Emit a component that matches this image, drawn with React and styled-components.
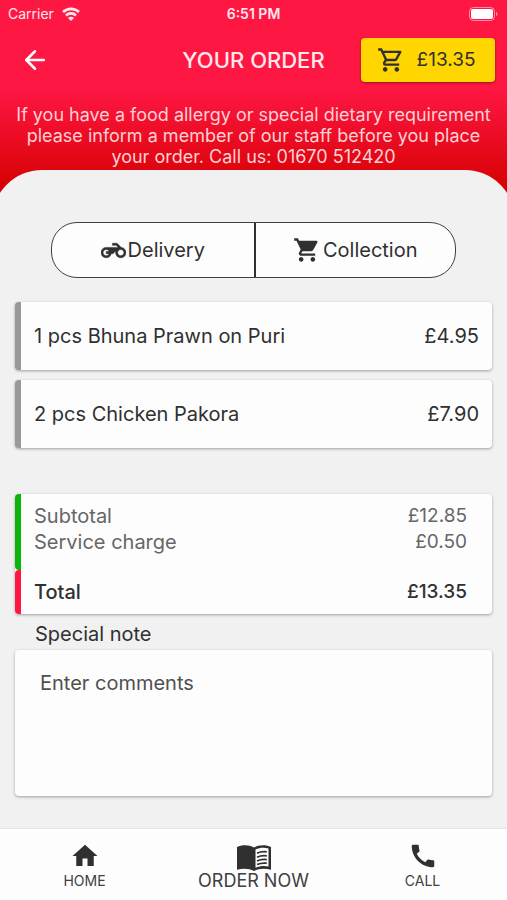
import { createGlobalStyle, styled } from "styled-components";

import { FiArrowLeft } from 'react-icons/fi';
import { MdOutlineShoppingCart, MdShoppingCart, MdHome, MdCall } from 'react-icons/md';

const items = [
  { qty: 1, name: 'Bhuna Prawn on Puri', price: '£4.95' },
  { qty: 2, name: 'Chicken Pakora', price: '£7.90' },
];

const MotorcycleIcon = () => (
  <Motorcycle viewBox="0 0 24 24" aria-hidden="true">
    <path d="M19.44 9.03L15.41 5H11v2h3.59l2 2H5c-2.8 0-5 2.2-5 5s2.2 5 5 5c2.46 0 4.45-1.69 4.9-4h1.65l2.77-2.77c-.21.54-.32 1.14-.32 1.77 0 2.8 2.2 5 5 5s5-2.2 5-5c0-2.65-1.97-4.77-4.56-4.97zM7.82 15C7.4 16.15 6.28 17 5 17c-1.63 0-3-1.37-3-3s1.37-3 3-3c1.28 0 2.4.85 2.82 2H5v2h2.82zM19 17c-1.66 0-3-1.34-3-3s1.34-3 3-3 3 1.34 3 3-1.34 3-3 3z" />
  </Motorcycle>
);

const WifiIcon = () => (
  <svg width="18" height="14" viewBox="0 0 18 14" fill="none" stroke="currentColor" strokeWidth="2.7" aria-hidden="true">
    <path d="M1 5C5.5.7 12.5.7 17 5" />
    <path d="M4 8.4C6.8 5.8 11.2 5.8 14 8.4" />
    <path d="M9 14L6 10.9C7.6 9.5 10.4 9.5 12 10.9Z" fill="currentColor" stroke="none" />
  </svg>
);

const BatteryIcon = () => (
  <svg width="30" height="14" viewBox="0 0 30 14" aria-hidden="true">
    <rect x=".5" y=".5" width="25" height="13" rx="4" fill="none" stroke="#fff" strokeOpacity=".5" />
    <rect x="2" y="2" width="22" height="10" rx="2" fill="#fff" />
    <path d="M27 5c2 .6 2 3.4 0 4z" fill="#fff" fillOpacity=".5" />
  </svg>
);

const MenuBookIcon = () => (
  <MenuBook viewBox="0 0 34 26" aria-hidden="true">
    <path d="M0 2C5-.3 12-.3 17 2.400C22-.3 29-.3 34 2V24.800C28 23 22 23.200 17 26C12 23.200 6 23 0 24.800Z" fill="currentColor" />
    <path d="M18.500 4.500C22.500 2.600 27.500 2.300 31.500 3.500V21.500C27 20.500 22.500 21 18.500 22.800Z" fill="#fdfdfd" />
    <path d="M20 8.200C23 6.800 26.500 6.400 29.800 6.800M20 12.200C23 10.800 26.500 10.400 29.800 10.800M20 16C23 14.600 26.500 14.200 29.800 14.600M20 19.600C23 18.200 26.500 17.800 29.800 18.200" fill="none" stroke="currentColor" strokeWidth="1.7" />
  </MenuBook>
);

const App = () => {
  return (
    <Page>
      <GlobalStyle />
      <Header>
        <StatusBar>
          <Carrier>Carrier <WifiIcon /></Carrier>
          <Time>6:51 PM</Time>
          <Battery><BatteryIcon /></Battery>
        </StatusBar>

        <TitleBar>
          <BackButton aria-label="Back"><FiArrowLeft /></BackButton>
          <Title>YOUR ORDER</Title>
          <CartButton><MdOutlineShoppingCart />£13.35</CartButton>
        </TitleBar>

        <Notice>
          If you have a food allergy or special dietary requirement please inform a member of our staff before you place your order. Call us: 01670 512420
        </Notice>
      </Header>

      <Sheet>
        <Methods>
          <Method><MotorcycleIcon />Delivery</Method>
          <Method><MdShoppingCart size={28} />Collection</Method>
        </Methods>

        <Items>
          {items.map((item) => (
            <Item key={item.name}>
              <span>{item.qty} pcs {item.name}</span>
              <span>{item.price}</span>
            </Item>
          ))}
        </Items>

        <Summary>
          <Charges>
            <Row><span>Subtotal</span><Amount>£12.85</Amount></Row>
            <Row><span>Service charge</span><Amount>£0.50</Amount></Row>
          </Charges>
          <Total><span>Total</span><Amount>£13.35</Amount></Total>
        </Summary>

        <NoteLabel htmlFor="note">Special note</NoteLabel>
        <Note id="note" placeholder="Enter comments" />
      </Sheet>

      <Nav>
        <NavLink href="#home"><MdHome size={30} />HOME</NavLink>
        <NavLink href="#order" $large><MenuBookIcon />ORDER NOW</NavLink>
        <NavLink href="#call"><MdCall size={30} />CALL</NavLink>
      </Nav>
    </Page>
  );
};

export default App;

const GlobalStyle = createGlobalStyle`
  * {
    box-sizing: border-box;
  }

  body {
    margin: 0;
    font-family: Inter, "Open Sans", sans-serif;
    color: #303030;
    background-color: #f1f1f1;
  }

  button, textarea {
    font-family: inherit;
    color: #303030;
  }
`;

const Page = styled.div`
  display: flex;
  flex-direction: column;
  min-height: 100vh;
  overflow-x: hidden;
`;

const Header = styled.header`
  padding-bottom: 34px;
  color: #fff;
  background: linear-gradient(#ff1744 0, #ff1744 88px, #d50000 192px);
`;

const StatusBar = styled.div`
  display: grid;
  grid-template-columns: 1fr auto 1fr;
  align-items: center;
  height: 27px;
  padding: 0 8px;
  font-size: 14px;
  color: #ffe8ec;
`;

const Carrier = styled.span`
  display: flex;
  align-items: center;
  gap: 8px;
`;

const Time = styled.span`
  font-weight: 600;
`;

const Battery = styled.span`
  display: flex;
  justify-content: flex-end;
`;

const TitleBar = styled.div`
  display: grid;
  grid-template-columns: 1fr auto 1fr;
  align-items: center;
  height: 65px;
  padding: 0 12px;
`;

const BackButton = styled.button`
  display: flex;
  justify-self: start;
  padding: 0 8px;
  border: 0;
  background: none;
  color: #fff;
  font-size: 30px;
  cursor: pointer;
`;

const Title = styled.h1`
  margin: 0;
  font-size: 22px;
  font-weight: 500;
  line-height: 28px;
  color: #ffe8ec;
`;

const CartButton = styled.button`
  display: flex;
  align-items: center;
  justify-content: center;
  justify-self: end;
  gap: 12px;
  width: 134px;
  height: 44px;
  padding: 0 4px 0 0;
  border: 0;
  border-radius: 4px;
  background-color: #ffd600;
  box-shadow: 0 1px 3px rgba(0, 0, 0, .4);
  font-size: 19px;
  cursor: pointer;

  svg {
    font-size: 28px;
  }
`;

const Notice = styled.p`
  margin: 12px 12px 0;
  font-size: 18px;
  line-height: 21px;
  text-align: center;
  color: #ffd0d4;
`;

const Sheet = styled.main`
  display: flex;
  flex-direction: column;
  flex: 1;
  margin: -31px -8px 0;
  padding: 52px 23px 32px;
  border-radius: 50px 50px 0 0;
  background-color: #f1f1f1;
`;

const Methods = styled.div`
  display: grid;
  grid-template-columns: 1fr 1fr;
  margin: 0 36px 24px;
  border: 1px solid #404040;
  border-radius: 26px;
  background-color: #fdfdfd;
  overflow: hidden;
`;

const Method = styled.button`
  display: flex;
  align-items: center;
  justify-content: center;
  gap: 2px;
  height: 54px;
  padding: 0;
  border: 0;
  background: none;
  font-size: 20px;
  cursor: pointer;

  & + & {
    border-left: 2px solid #303030;
  }
`;

const Motorcycle = styled.svg`
  width: 25px;
  height: 25px;
  fill: currentColor;
  stroke: currentColor;
  stroke-width: .5px;
`;

const Items = styled.ul`
  display: grid;
  gap: 10px;
  margin: 0 0 46px;
  padding: 0;
  list-style: none;
`;

const Item = styled.li`
  display: flex;
  align-items: center;
  justify-content: space-between;
  height: 68px;
  padding: 0 13px;
  border-left: 6px solid #999;
  border-radius: 4px;
  background-color: #fdfdfd;
  box-shadow: 0 1px 3px rgba(0, 0, 0, .35);
  font-size: 20px;
`;

const Summary = styled.section`
  border-radius: 4px;
  background-color: #fdfdfd;
  box-shadow: 0 1px 3px rgba(0, 0, 0, .35);
  font-size: 20px;
`;

const Charges = styled.div`
  height: 76px;
  padding: 9px 25px 0 13px;
  border-left: 6px solid #0bb30b;
  border-radius: 4px;
  color: #666;
`;

const Row = styled.div`
  display: flex;
  justify-content: space-between;
  line-height: 26px;
`;

const Amount = styled.span`
  font-size: 19px;
`;

const Total = styled(Row)`
  height: 44px;
  padding: 9px 25px 0 13px;
  border-left: 6px solid #ff1744;
  border-radius: 4px;
  font-weight: 500;
`;

const NoteLabel = styled.label`
  padding: 7px 20px 3px;
  font-size: 20px;
  line-height: 26px;
`;

const Note = styled.textarea`
  display: block;
  width: 100%;
  height: 146px;
  padding: 20px 25px;
  border: 0;
  border-radius: 4px;
  background-color: #fdfdfd;
  box-shadow: 0 1px 3px rgba(0, 0, 0, .35);
  font-size: 20px;
  line-height: 26px;
  resize: none;

  &::placeholder {
    color: #505050;
    opacity: 1;
  }
`;

const Nav = styled.nav`
  display: grid;
  grid-template-columns: repeat(3, 1fr);
  height: 72px;
  border-top: 1px solid #e4e4e4;
  background-color: #fdfdfd;
`;

const NavLink = styled.a`
  display: flex;
  flex-direction: column;
  align-items: center;
  padding-top: ${({ $large }) => ($large ? '16px' : '12px')};
  font-size: ${({ $large }) => ($large ? '18px' : '14px')};
  line-height: 20px;
  color: #404040;
  text-decoration: none;

  svg {
    color: #303030;
  }
`;

const MenuBook = styled.svg`
  width: 34px;
  height: 26px;
`;
